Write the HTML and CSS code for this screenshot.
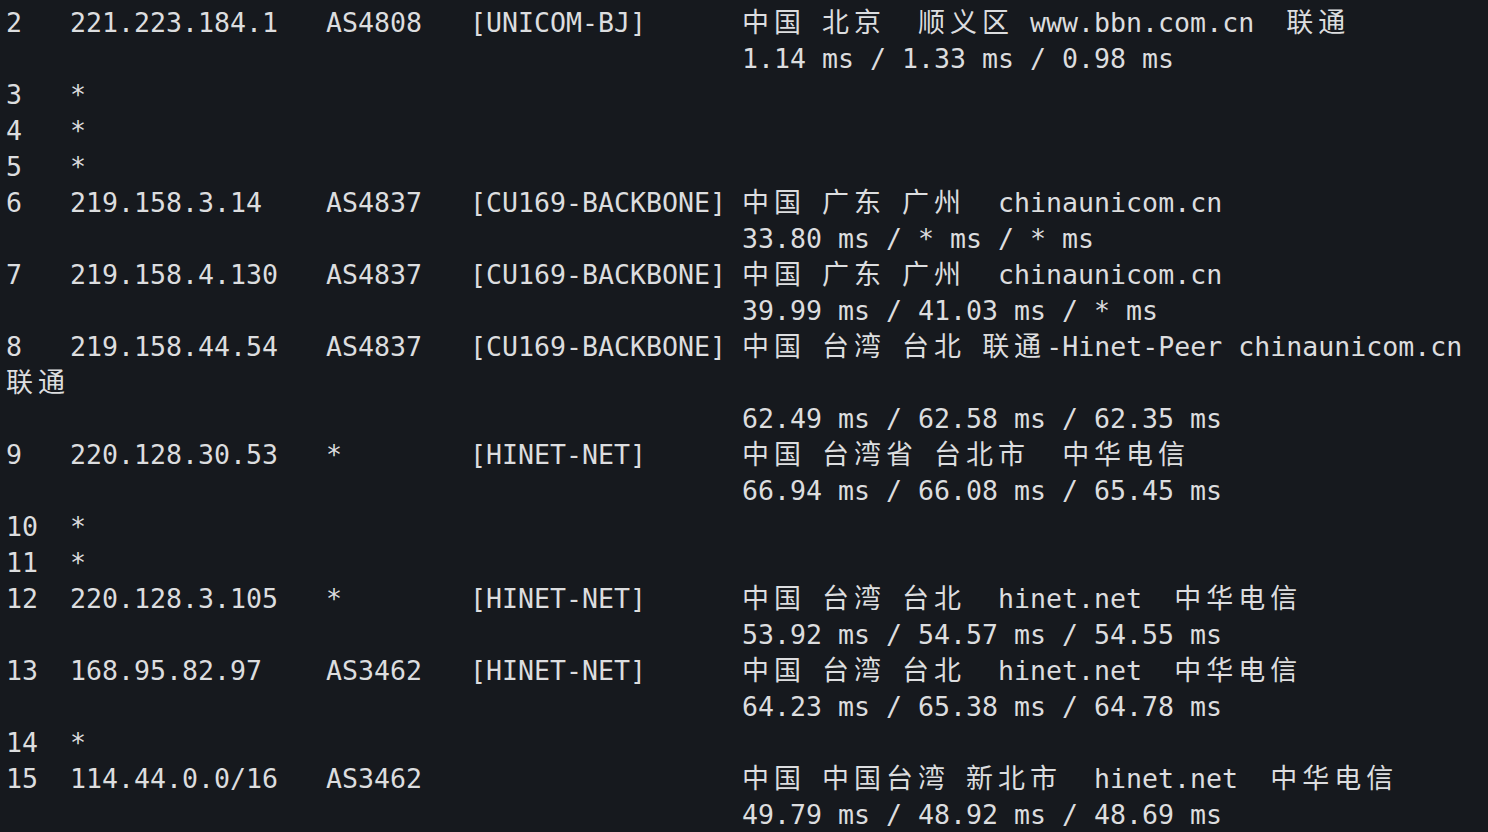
FILE: index.html
```html
<!DOCTYPE html>
<html lang="zh">
<head>
<meta charset="utf-8">
<title>trace</title>
<link rel="stylesheet" href="styles.css">
</head>
<body>
<main class="term">
<div class="ln">2   221.223.184.1   AS4808   [UNICOM-BJ]      <span class="w">中国</span> <span class="w">北京</span>  <span class="w">顺义区</span> www.bbn.com.cn  <span class="w">联通</span></div>
<div class="ln">                                              1.14 ms / 1.33 ms / 0.98 ms</div>
<div class="ln">3   *</div>
<div class="ln">4   *</div>
<div class="ln">5   *</div>
<div class="ln">6   219.158.3.14    AS4837   [CU169-BACKBONE] <span class="w">中国</span> <span class="w">广东</span> <span class="w">广州</span>  chinaunicom.cn</div>
<div class="ln">                                              33.80 ms / * ms / * ms</div>
<div class="ln">7   219.158.4.130   AS4837   [CU169-BACKBONE] <span class="w">中国</span> <span class="w">广东</span> <span class="w">广州</span>  chinaunicom.cn</div>
<div class="ln">                                              39.99 ms / 41.03 ms / * ms</div>
<div class="ln">8   219.158.44.54   AS4837   [CU169-BACKBONE] <span class="w">中国</span> <span class="w">台湾</span> <span class="w">台北</span> <span class="w">联通</span>-Hinet-Peer chinaunicom.cn</div>
<div class="ln"><span class="w">联通</span></div>
<div class="ln">                                              62.49 ms / 62.58 ms / 62.35 ms</div>
<div class="ln">9   220.128.30.53   *        [HINET-NET]      <span class="w">中国</span> <span class="w">台湾省</span> <span class="w">台北市</span>  <span class="w">中华电信</span></div>
<div class="ln">                                              66.94 ms / 66.08 ms / 65.45 ms</div>
<div class="ln">10  *</div>
<div class="ln">11  *</div>
<div class="ln">12  220.128.3.105   *        [HINET-NET]      <span class="w">中国</span> <span class="w">台湾</span> <span class="w">台北</span>  hinet.net  <span class="w">中华电信</span></div>
<div class="ln">                                              53.92 ms / 54.57 ms / 54.55 ms</div>
<div class="ln">13  168.95.82.97    AS3462   [HINET-NET]      <span class="w">中国</span> <span class="w">台湾</span> <span class="w">台北</span>  hinet.net  <span class="w">中华电信</span></div>
<div class="ln">                                              64.23 ms / 65.38 ms / 64.78 ms</div>
<div class="ln">14  *</div>
<div class="ln">15  114.44.0.0/16   AS3462                    <span class="w">中国</span> <span class="w">中国台湾</span> <span class="w">新北市</span>  hinet.net  <span class="w">中华电信</span></div>
<div class="ln">                                              49.79 ms / 48.92 ms / 48.69 ms</div>
</main>
</body>
</html>
```

FILE: styles.css
```css
html, body {
  margin: 0;
  padding: 0;
  background: #16191e;
  height: 100%;
  overflow: hidden;
}

.term {
  display: flex;
  flex-direction: column;
  padding: 5px 0 0 6px;
  color: #dcdddf;
  font-family: "DejaVu Sans Mono", "Liberation Mono", monospace;
  font-size: 26.58px;
}

.ln {
  white-space: pre;
  height: 36px;
  line-height: 36px;
}

.w {
  font-family: "Noto Sans CJK SC", sans-serif;
  font-size: 27px;
  font-weight: 400;
  letter-spacing: 5px;
  line-height: 1;
}
```
